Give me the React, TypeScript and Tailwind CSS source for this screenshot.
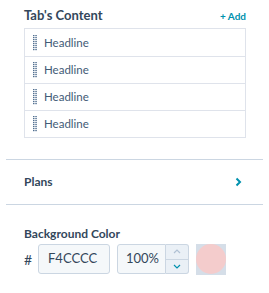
const ROWS = ["Headline", "Headline", "Headline", "Headline"]

function Grip() {
  return (
    <svg width="4" height="16" viewBox="0 0 4 16" className="shrink-0">
      {Array.from({ length: 8 }).map((_, i) => (
        <g key={i}>
          <rect x="0" y={i * 2} width="1.5" height="1.2" fill="#516f90" />
          <rect x="2.3" y={i * 2} width="1.5" height="1.2" fill="#516f90" />
        </g>
      ))}
    </svg>
  )
}

export default function App() {
  return (
    <div className="w-[269px] h-[293px] bg-white text-[#33475b] font-['Lato',sans-serif] overflow-hidden">
      <div className="px-6 pt-[9px]">
        <div className="w-[222px] flex items-center justify-between h-[14px] mb-[5px]">
          <span className="text-[13px] font-bold">Tab's Content</span>
          <span className="text-[10px] font-bold text-[#0091ae]">+ Add</span>
        </div>
        <div className="w-[222px] border border-[#dfe3eb]">
          {ROWS.map((r, i) => (
            <div key={i} className={`flex items-center gap-[7px] h-[27px] pl-[8px] ${i > 0 ? "border-t border-[#dfe3eb]" : ""}`}>
              <Grip />
              <span className="text-[11.5px] text-[#425b76]">{r}</span>
            </div>
          ))}
        </div>
      </div>

      <div className="mx-[6px] mt-[21px] border-t border-[#cbd6e2]" />
      <div className="flex items-center justify-between h-[44px] pl-6 pr-[27px]">
        <span className="text-[12px] font-bold">Plans</span>
        <svg width="7" height="10" viewBox="0 0 7 10">
          <path d="M1.5 1.5 L5 5 L1.5 8.5" stroke="#0091ae" strokeWidth="2" fill="none" />
        </svg>
      </div>
      <div className="mx-[6px] border-t border-[#cbd6e2]" />

      <div className="px-6 pt-[20px]">
        <div className="text-[12px] font-bold h-[14px] mb-[5px]">Background Color</div>
        <div className="flex items-center h-[30px]">
          <span className="text-[14px] w-[14px] text-[#33475b]">#</span>
          <div className="w-[72px] h-[30px] bg-[#f5f8fa] border border-[#cbd6e2] rounded-[3px] flex items-center pl-[9px] text-[13px] text-[#33475b]">F4CCCC</div>
          <div className="ml-[7px] flex h-[30px]">
            <div className="w-[49px] bg-[#f5f8fa] border border-[#cbd6e2] rounded-l-[3px] flex items-center pl-[8px] text-[13px]">100%</div>
            <div className="w-[23px] flex flex-col border border-l-0 border-[#cbd6e2] rounded-r-[3px] bg-[#eaf0f6]">
              <div className="flex-1 flex items-center justify-center border-b border-[#cbd6e2]">
                <svg width="8" height="5" viewBox="0 0 8 5"><path d="M1 4 L4 1 L7 4" stroke="#b0c1d4" strokeWidth="1.2" fill="none" /></svg>
              </div>
              <div className="flex-1 flex items-center justify-center">
                <svg width="8" height="5" viewBox="0 0 8 5"><path d="M1 1 L4 4 L7 1" stroke="#0091ae" strokeWidth="1.2" fill="none" /></svg>
              </div>
            </div>
          </div>
          <div className="ml-[7px] w-[30px] h-[31px] bg-[#d5dee8] flex items-center justify-center">
            <div className="w-[30px] h-[30px] rounded-full bg-[#f4cccc]" />
          </div>
        </div>
      </div>
    </div>
  )
}
